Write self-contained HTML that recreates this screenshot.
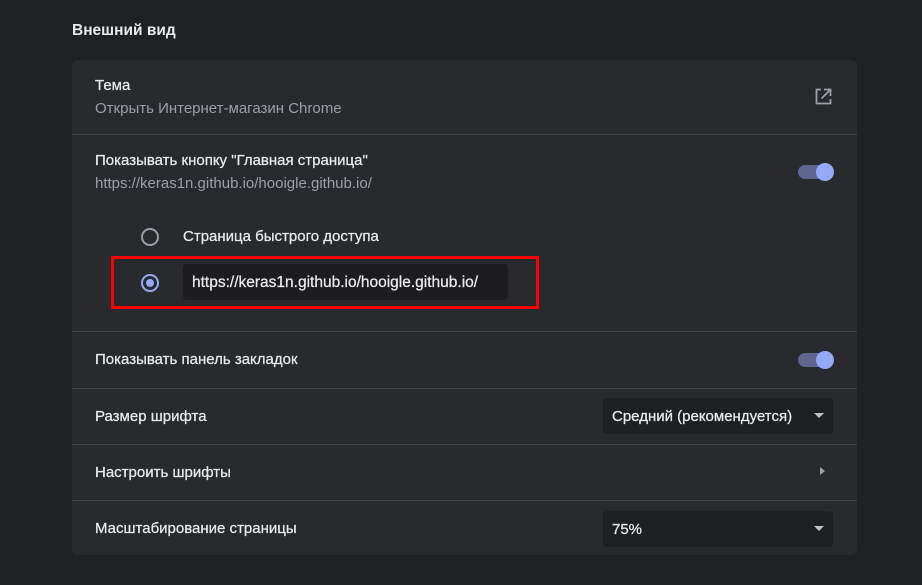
<!DOCTYPE html><html><head><meta charset="utf-8"><style>
body{margin:0;width:922px;height:585px;background:#202124;font-family:"Liberation Sans",sans-serif;color:#e8eaed;position:relative;overflow:hidden;font-size:15px}
.a{position:absolute}
.card{left:72px;top:60px;width:785px;height:495px;background:#292a2d;border-radius:6px}
.hr{position:absolute;left:72px;width:785px;height:1px;background:#3f4043}
.t{position:absolute;left:95px;font-size:15px;color:#e8eaed;-webkit-text-stroke:0.25px #e8eaed}
.s{position:absolute;left:95px;font-size:15px;color:#9aa0a6}
.tog{position:absolute;left:798px;width:34px;height:14px;border-radius:7px;background:#5f6790}
.tog::after{content:"";position:absolute;right:-2px;top:-2px;width:18px;height:18px;border-radius:50%;background:#94a9f7}
.dd{position:absolute;left:603px;width:230px;height:36px;background:#1f2022;border-radius:4px;font-size:15px;line-height:37px;text-indent:9px;-webkit-text-stroke:0.25px #e8eaed}
.dd::after{content:"";position:absolute;right:9px;top:15px;border:5px solid transparent;border-top:5px solid #bdc1c6;border-bottom:0}
</style></head><body>
<div class="a" style="left:72px;top:22px;font-size:15.5px;font-weight:bold;color:#e8eaed">Внешний вид</div>
<div class="a card"></div>
<div class="t" style="top:77px">Тема</div>
<div class="s" style="top:100px">Открыть Интернет-магазин Chrome</div>
<svg class="a" style="left:813px;top:87px" width="20" height="20" viewBox="0 0 20 20"><path d="M8 2.5H3.5v14h14V12M11 2.5h6.5V9M17.5 2.5l-9 9" fill="none" stroke="#9aa0a6" stroke-width="1.8"/></svg>
<div class="hr" style="top:134px"></div>
<div class="t" style="top:152px">Показывать кнопку "Главная страница"</div>
<div class="s" style="top:175px">https://keras1n.github.io/hooigle.github.io/</div>
<div class="tog" style="top:165px"></div>
<div class="a" style="left:141px;top:228px;width:14px;height:14px;border:2px solid #9aa0a6;border-radius:50%"></div>
<div class="t" style="left:183px;top:228px">Страница быстрого доступа</div>
<div class="a" style="left:111px;top:256px;width:422px;height:47px;border:3px solid #f00"></div>
<div class="a" style="left:141px;top:274px;width:14px;height:14px;border:2px solid #94a9f7;border-radius:50%"></div>
<div class="a" style="left:146px;top:279px;width:8px;height:8px;background:#94a9f7;border-radius:50%"></div>
<div class="a" style="left:183px;top:264px;width:325px;height:36px;background:#1d1d1f;border-radius:4px;line-height:37px;text-indent:9px;font-size:15.5px;-webkit-text-stroke:0.25px #e8eaed">https://keras1n.github.io/hooigle.github.io/</div>
<div class="hr" style="top:331px"></div>
<div class="t" style="top:351px">Показывать панель закладок</div>
<div class="tog" style="top:353px"></div>
<div class="hr" style="top:388px"></div>
<div class="t" style="top:408px">Размер шрифта</div>
<div class="dd" style="top:398px">Средний (рекомендуется)</div>
<div class="hr" style="top:444px"></div>
<div class="t" style="top:464px">Настроить шрифты</div>
<div class="a" style="left:820px;top:467px;border:4px solid transparent;border-left:5px solid #9aa0a6;border-right:0"></div>
<div class="hr" style="top:500px"></div>
<div class="t" style="top:520px">Масштабирование страницы</div>
<div class="dd" style="top:511px">75%</div>
</body></html>
